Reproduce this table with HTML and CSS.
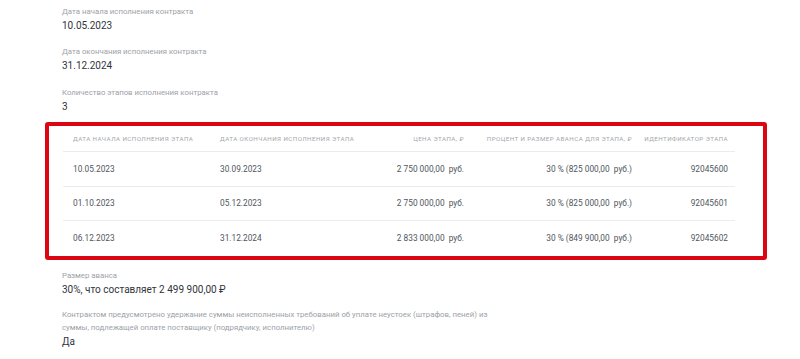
FILE: index.html
```html
<!DOCTYPE html>
<html lang="ru">
<head>
<meta charset="utf-8">
<link rel="stylesheet" href="styles.css">
</head>
<body>
<div class="page">
  <div class="fields">
    <div class="field">
      <div class="label">Дата начала исполнения контракта</div>
      <div class="value">10.05.2023</div>
    </div>
    <div class="field">
      <div class="label">Дата окончания исполнения контракта</div>
      <div class="value">31.12.2024</div>
    </div>
    <div class="field">
      <div class="label">Количество этапов исполнения контракта</div>
      <div class="value">3</div>
    </div>
  </div>
  <div class="stages">
    <table class="stage-table">
      <colgroup>
        <col class="c1"><col class="c2"><col class="c3"><col class="c4"><col class="c5">
      </colgroup>
      <thead>
        <tr>
          <th>Дата начала исполнения этапа</th>
          <th>Дата окончания исполнения этапа</th>
          <th class="num">Цена этапа, ₽</th>
          <th class="num">Процент и размер аванса для этапа, ₽</th>
          <th class="num">Идентификатор этапа</th>
        </tr>
      </thead>
      <tbody>
        <tr>
          <td>10.05.2023</td><td>30.09.2023</td>
          <td class="num">2 750 000,00&nbsp; руб.</td>
          <td class="num">30 % (825 000,00&nbsp; руб.)</td>
          <td class="num">92045600</td>
        </tr>
        <tr>
          <td>01.10.2023</td><td>05.12.2023</td>
          <td class="num">2 750 000,00&nbsp; руб.</td>
          <td class="num">30 % (825 000,00&nbsp; руб.)</td>
          <td class="num">92045601</td>
        </tr>
        <tr>
          <td>06.12.2023</td><td>31.12.2024</td>
          <td class="num">2 833 000,00&nbsp; руб.</td>
          <td class="num">30 % (849 900,00&nbsp; руб.)</td>
          <td class="num">92045602</td>
        </tr>
      </tbody>
    </table>
  </div>
  <div class="fields fields-after">
    <div class="field">
      <div class="label">Размер аванса</div>
      <div class="value">30%, что составляет 2 499 900,00 ₽</div>
    </div>
    <div class="field">
      <div class="label label-wide">Контрактом предусмотрено удержание суммы неисполненных требований об уплате неустоек (штрафов, пеней) из суммы, подлежащей оплате поставщику (подрядчику, исполнителю)</div>
      <div class="value">Да</div>
    </div>
  </div>
</div>
</body>
</html>
```

FILE: styles.css
```css
html, body {
  margin: 0;
  padding: 0;
  background: #ffffff;
}
body {
  font-family: Roboto, "Liberation Sans", sans-serif;
  color: #333a40;
  width: 800px;
  height: 359px;
  overflow: hidden;
}
.page {
  padding-top: 4.5px;
}
.fields {
  padding-left: 62px;
  display: flex;
  flex-direction: column;
  gap: 12.5px;
}
.label {
  font-size: 7.8px;
  line-height: 13px;
  color: #9da2a8;
}
.label-wide {
  width: 440px;
}
.value {
  font-size: 10px;
  line-height: 15px;
  color: #2f353b;
}
.stages {
  margin: 8.5px 0 0 45px;
  width: 700px;
  border: 4px solid #dc0612;
  border-radius: 3px;
  padding: 0 0 1px 14px;
}
.stage-table {
  border-collapse: collapse;
  table-layout: fixed;
  width: 672px;
}
.c1 { width: 147px; }
.c2 { width: 160px; }
.c3 { width: 104px; }
.c4 { width: 168px; }
.c5 { width: 93px; }
.stage-table th {
  height: 25px;
  padding: 0 10px;
  font-size: 6.2px;
  font-weight: 400;
  letter-spacing: 0.45px;
  text-transform: uppercase;
  color: #a3a7ad;
  text-align: left;
  white-space: nowrap;
  vertical-align: middle;
}
.stage-table td {
  height: 33.5px;
  padding: 0 10px;
  font-size: 8.3px;
  color: #50565c;
  border-top: 1px solid #ececec;
  white-space: nowrap;
  vertical-align: middle;
}
.stage-table .num {
  text-align: right;
}
.stage-table th:last-child, .stage-table td:last-child {
  padding: 0 7px 0 0;
}
.fields-after {
  margin-top: 9px;
  gap: 11.5px;
}
```
